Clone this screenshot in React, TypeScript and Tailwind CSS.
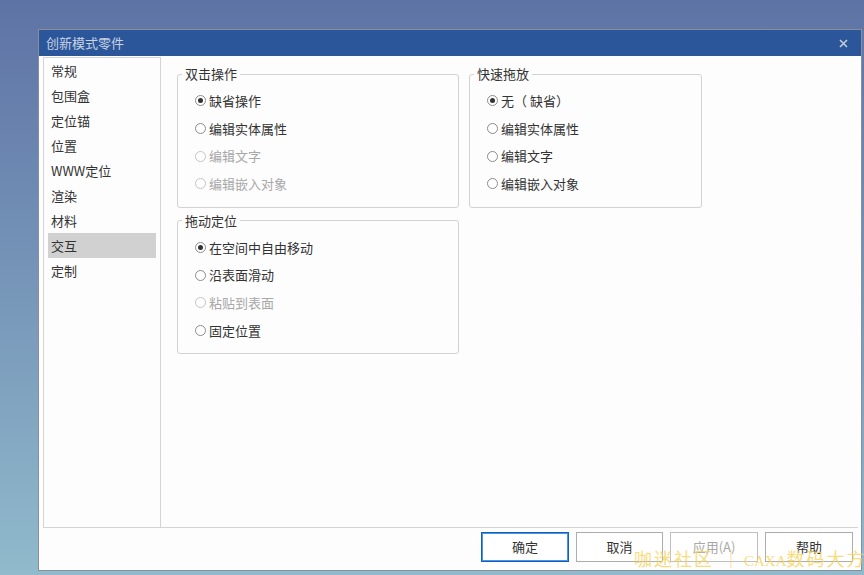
import React from 'react'

const font = { fontFamily: '"Noto Sans CJK SC", "Noto Sans", sans-serif' }

type Opt = { label: string; checked?: boolean; disabled?: boolean }

const navItems = ['常规', '包围盒', '定位锚', '位置', 'WWW定位', '渲染', '材料', '交互', '定制']

function Radio({ label, checked, disabled }: Opt) {
  return (
    <div className="flex items-center h-[27.67px]">
      <span
        className={`w-[11px] h-[11px] rounded-full border flex items-center justify-center mr-[3px] bg-white ${
          disabled ? 'border-[#c4c4c4]' : 'border-[#8c8c8c]'
        }`}
      >
        {checked && <span className="w-[5px] h-[5px] rounded-full bg-[#333333]" />}
      </span>
      <span className={disabled ? 'text-[#a8a8a8]' : 'text-[#333333]'}>{label}</span>
    </div>
  )
}

function Group({ title, width, options }: { title: string; width: string; options: Opt[] }) {
  return (
    <fieldset className={`${width} border border-[#d2d2d2] rounded-[3px] pl-[17px] pt-[5px] pb-[9px]`}>
      <legend className="-ml-[13px] px-[3px] leading-[16px] text-[#333333]">{title}</legend>
      {options.map(o => (
        <Radio key={o.label} {...o} />
      ))}
    </fieldset>
  )
}

export default function App() {
  return (
    <div
      className="relative w-[864px] h-[575px] overflow-hidden bg-gradient-to-b from-[#5e73a5] to-[#91bacc] pt-[29px] pl-[38px] text-[13px]"
      style={font}
    >
      <div className="w-[824px] h-[542px] border border-[#8a8e98] bg-[#fdfdfd] flex flex-col">
        {/* Title bar */}
        <div className="h-[26px] bg-[#2b579a] flex items-center justify-between pl-[7px] pr-[13px]">
          <span className="text-[#c9d2e3] text-[13px]">创新模式零件</span>
          <svg width="9" height="9" viewBox="0 0 9 9" className="text-[#c4ccdc]">
            <path d="M1 1L8 8M8 1L1 8" stroke="currentColor" strokeWidth="1.6" />
          </svg>
        </div>

        {/* Body */}
        <div className="flex-1 flex flex-col pt-[1px] pl-[4px] pr-[3px]">
          <div className="flex h-[471px] border-b border-[#d4d4d4]">
            <div className="w-[118px] border-l border-t border-r border-[#d4d4d4] px-[4px]">
              {navItems.map(item => (
                <div
                  key={item}
                  className={`h-[25px] flex items-center pl-[3px] text-[#333333] ${
                    item === '交互' ? 'bg-[#d1d1d1]' : ''
                  }`}
                >
                  {item}
                </div>
              ))}
            </div>

            <div className="flex-1 pl-[16px] pt-[9px] flex flex-col gap-[5px]">
              <div className="flex gap-[10px] items-start">
                <Group
                  title="双击操作"
                  width="w-[282px]"
                  options={[
                    { label: '缺省操作', checked: true },
                    { label: '编辑实体属性' },
                    { label: '编辑文字', disabled: true },
                    { label: '编辑嵌入对象', disabled: true },
                  ]}
                />
                <Group
                  title="快速拖放"
                  width="w-[233px]"
                  options={[
                    { label: '无（ 缺省）', checked: true },
                    { label: '编辑实体属性' },
                    { label: '编辑文字' },
                    { label: '编辑嵌入对象' },
                  ]}
                />
              </div>
              <Group
                title="拖动定位"
                width="w-[282px]"
                options={[
                  { label: '在空间中自由移动', checked: true },
                  { label: '沿表面滑动' },
                  { label: '粘贴到表面', disabled: true },
                  { label: '固定位置' },
                ]}
              />
            </div>
          </div>

          {/* Footer buttons */}
          <div className="flex justify-end gap-[7px] pt-[4px] pr-[5px]">
            <button className="w-[88px] h-[30px] border border-[#0a62c9] shadow-[inset_0_0_0_1px_#4f93de] bg-white text-[#333333]">
              确定
            </button>
            <button className="w-[87px] h-[30px] border border-[#adadad] bg-white text-[#333333]">取消</button>
            <button className="w-[88px] h-[30px] border border-[#bfbfbf] bg-white text-[#a8a8a8]">应用(A)</button>
            <button className="w-[88px] h-[30px] border border-[#adadad] bg-white text-[#333333]">帮助</button>
          </div>
        </div>
      </div>

      {/* watermark */}
      <div
        className="absolute left-[634px] top-[547px] text-[18px] text-[#f7d35a]/80 whitespace-nowrap pointer-events-none flex items-baseline"
        style={{ fontFamily: '"Liberation Serif", "Noto Sans CJK SC", serif' }}
      >
        <span className="tracking-[2px]">咖迷社区</span>
        <span className="pl-[8px] pr-[4px]">｜</span>
        <span className="text-[15px]">CAXA</span>
        <span className="tracking-[2px]">数码大方</span>
      </div>
    </div>
  )
}
